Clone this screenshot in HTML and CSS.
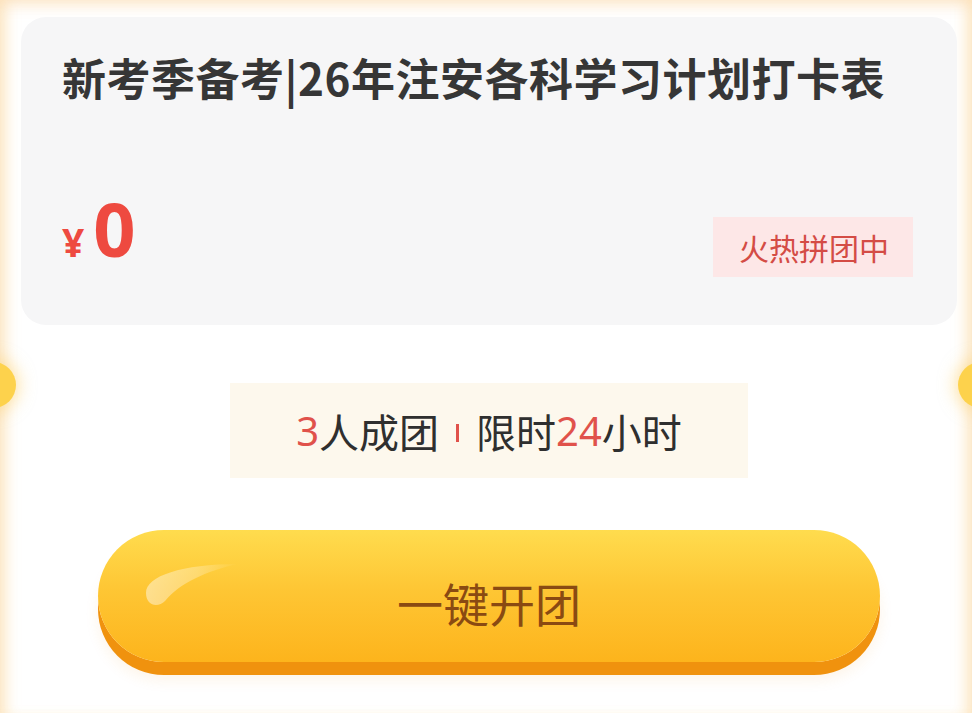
FILE: index.html
```html
<!DOCTYPE html>
<html lang="zh-CN">
<head>
    <meta charset="UTF-8">
    <meta name="viewport" content="width=device-width, initial-scale=1.0">
    <title>拼团</title>
    <link rel="stylesheet" href="styles.css">
</head>
<body>
    <div class="panel">
        <!-- side notches -->
        <span class="notch notch-left"></span>
        <span class="notch notch-right"></span>

        <!-- course card -->
        <div class="course-card">
            <h1 class="course-title">新考季备考|26年注安各科学习计划打卡表</h1>
            <div class="price-row">
                <div class="price">
                    <span class="price-unit">¥</span><span class="price-num">0</span>
                </div>
                <span class="hot-tag">火热拼团中</span>
            </div>
        </div>

        <!-- group rule -->
        <div class="rule-box">
            <span class="red">3</span>人成团<span class="divider"></span>限时<span class="red">24</span>小时
        </div>

        <!-- open group button -->
        <button class="open-btn" type="button">
            <svg class="shine" width="96" height="48" viewBox="0 0 96 48">
                <defs>
                    <linearGradient id="shineGrad" x1="0" y1="0" x2="1" y2="0">
                        <stop offset="0" stop-color="#fff" stop-opacity="0.45"/>
                        <stop offset="0.55" stop-color="#fff" stop-opacity="0.28"/>
                        <stop offset="1" stop-color="#fff" stop-opacity="0"/>
                    </linearGradient>
                </defs>
                <path d="M2 33 C2 16 38 4 94 4 C62 11 36 23 21 41 C14 48 2 46 2 33 Z" fill="url(#shineGrad)"/>
            </svg>
            <span class="btn-text">一键开团</span>
        </button>
    </div>
</body>
</html>
```

FILE: styles.css
```css
/* page base */
body {
    margin: 0;
    padding: 0;
    background-color: #fff;
    font-family: "Noto Sans", "Noto Sans CJK SC", sans-serif;
    color: #333;
}

.panel {
    position: relative;
    height: 713px;
    box-sizing: border-box;
    padding: 17px 15px 0 21px;
    display: flex;
    flex-direction: column;
    align-items: center;
    overflow: hidden;
    background-color: #fff;
    box-shadow: inset 0 14px 14px -8px rgba(252, 220, 180, 0.6),
        inset 14px 0 14px -8px rgba(252, 214, 150, 0.55),
        inset -14px 0 14px -8px rgba(252, 214, 150, 0.55);
}

/* little half circles on the sides */
.notch {
    position: absolute;
    top: 362px;
    width: 46px;
    height: 46px;
    border-radius: 50%;
    background-color: #fdd24c;
    box-shadow: 0 0 16px 4px rgba(253, 210, 110, 0.5);
}

.notch-left {
    left: -30px;
}

.notch-right {
    right: -32px;
}

/* grey course card */
.course-card {
    align-self: stretch;
    height: 308px;
    box-sizing: border-box;
    padding: 30px 44px 48px 41px;
    border-radius: 25px;
    background-color: #f6f6f7;
    display: flex;
    flex-direction: column;
    justify-content: space-between;
}

.course-title {
    margin: 0;
    font-family: "Noto Sans CJK SC", sans-serif;
    font-size: 44px;
    line-height: 60px;
    font-weight: 700;
    letter-spacing: 0.5px;
    color: #363636;
    white-space: nowrap;
}

.price-row {
    display: flex;
    justify-content: space-between;
    align-items: flex-end;
}

.price {
    display: flex;
    align-items: baseline;
    margin-bottom: 11px;
    color: #ee4a40;
    font-weight: 700;
    line-height: 1;
}

.price-unit {
    font-size: 39px;
    margin-right: 9px;
}

.price-num {
    font-size: 74px;
}

.hot-tag {
    height: 60px;
    padding: 0 24px 0 26px;
    display: flex;
    align-items: center;
    background-color: #fde7e7;
    color: #d44c45;
    font-family: "Noto Sans CJK SC", sans-serif;
    font-size: 30px;
}

/* group rule box */
.rule-box {
    margin-top: 58px;
    width: 518px;
    height: 95px;
    display: flex;
    align-items: center;
    justify-content: center;
    background-color: #fdf8ed;
    font-family: "Noto Sans", "Noto Sans CJK SC", sans-serif;
    font-size: 40px;
    color: #2f2f2f;
}

.red {
    color: #e0524b;
}

.divider {
    display: inline-block;
    width: 3px;
    height: 18px;
    margin: 4px 17px 0 17px;
    background-color: #e0524b;
}

/* yellow button */
.open-btn {
    position: relative;
    margin-top: 52px;
    width: 782px;
    height: 132px;
    padding: 12px 0 0 0;
    border: none;
    border-radius: 66px;
    background: linear-gradient(180deg, #ffdc4e 0%, #fec634 45%, #fdb41c 100%);
    box-shadow: 0 13px 0 #f0920e, 0 18px 14px rgba(240, 150, 30, 0.1);
    display: flex;
    align-items: center;
    justify-content: center;
    cursor: pointer;
}

.shine {
    position: absolute;
    left: 46px;
    top: 30px;
}

.btn-text {
    font-family: "Noto Sans CJK SC", sans-serif;
    font-size: 46px;
    color: #8a4a12;
}
```
